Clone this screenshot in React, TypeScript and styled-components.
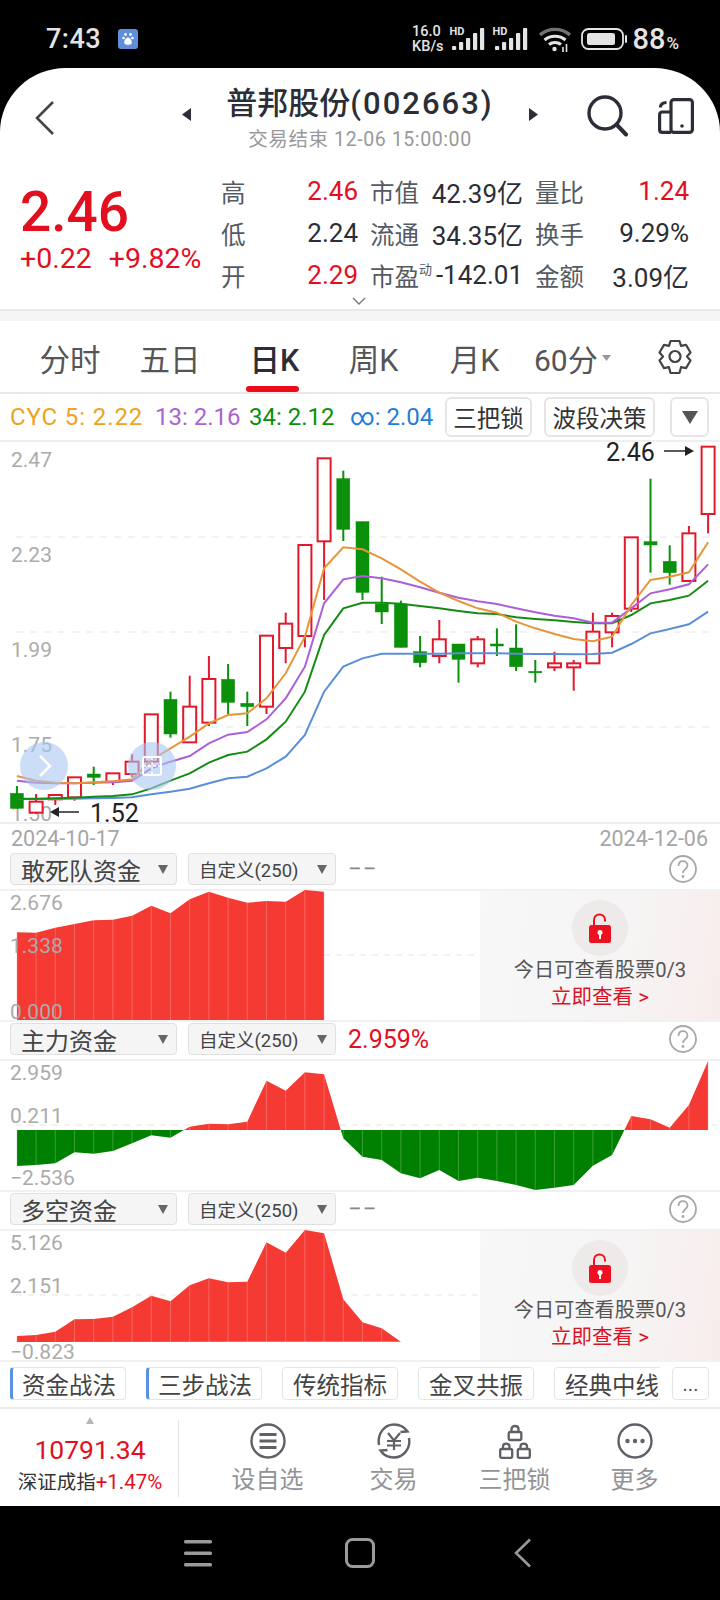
import React from "react";
import styled, { createGlobalStyle } from "styled-components";

const RED = "#e2101f";
const FONT = 'Roboto, "Noto Sans CJK SC", sans-serif';

const GlobalStyle = createGlobalStyle`
  html, body { margin: 0; padding: 0; background: #000; }
  * { box-sizing: border-box; }
  body { font-family: ${FONT}; }
`;

const Page = styled.div`
  width: 720px;
  height: 1600px;
  background: #000;
  display: flex;
  flex-direction: column;
  overflow: hidden;
`;

/* status bar */
const StatusBar = styled.div`
  height: 68px;
  flex: none;
  display: flex;
  align-items: center;
  padding: 10px 41px 0 46px;
  color: #e4e4e4;
`;
const Clock = styled.span`
  font-size: 27px;
  font-weight: 500;
  letter-spacing: 0.5px;
`;
const AppBadge = styled.span`
  width: 20px;
  height: 20px;
  margin-left: 17px;
  border-radius: 3px;
  background: #5f8fd8;
  display: flex;
  align-items: center;
  justify-content: center;
`;
const StatusRight = styled.div`
  margin-left: auto;
  display: flex;
  align-items: center;
`;
const Speed = styled.span`
  font-size: 14.5px;
  line-height: 15px;
  font-weight: 500;
  margin-right: 8px;
`;
const SignalGroup = styled.span`
  position: relative;
  display: flex;
  margin-right: 9px;
`;
const HdMark = styled.span`
  position: absolute;
  left: -2px;
  top: -2px;
  font-size: 11px;
  line-height: 11px;
  font-weight: 700;
`;
const WifiSlot = styled.span`
  display: flex;
  margin: 0 10px 0 1px;
`;
const BatteryText = styled.span`
  font-size: 29px;
  font-weight: 500;
  margin-left: 6px;
  small {
    font-size: 17px;
    margin-left: 1px;
  }
`;

/* white sheet */
const Sheet = styled.div`
  height: 1438px;
  flex: none;
  background: #fff;
  border-radius: 66px 66px 0 0 / 64px 64px 0 0;
  display: flex;
  flex-direction: column;
`;

const Header = styled.div`
  height: 92px;
  flex: none;
  display: grid;
  grid-template-columns: 110px 1fr 132px;
  align-items: center;
  padding-right: 26px;
`;
const BackButton = styled.div`
  padding: 8px 0 0 34px;
  display: flex;
`;
const TitleBar = styled.div`
  display: flex;
  align-items: center;
  justify-content: center;
  gap: 34px;
  padding-left: 48px;
`;
const TitleBlock = styled.div`
  text-align: center;
  width: 270px;
  padding-top: 6px;
`;
const Title = styled.div`
  font-size: 31px;
  line-height: 44px;
  font-weight: 500;
  color: #2b2e36;
  white-space: nowrap;
  span {
    letter-spacing: 2px;
  }
`;
const SubTitle = styled.div`
  margin-top: 1px;
  font-size: 19.5px;
  line-height: 26px;
  letter-spacing: 0.6px;
  color: #999;
  white-space: nowrap;
`;
const HeaderIcons = styled.div`
  display: flex;
  justify-content: space-between;
  align-items: center;
  padding: 4px 0 0 25px;
`;

const Quote = styled.div`
  height: 151px;
  flex: none;
  display: grid;
  grid-template-columns: 221px 1fr;
  padding: 10px 31px 0 0;
  border-bottom: 2px solid #e8e8e8;
  position: relative;
`;
const PriceBlock = styled.div`
  padding: 10px 0 0 20px;
  color: ${RED};
`;
const Price = styled.div`
  font-size: 55px;
  line-height: 64px;
  font-weight: 500;
`;
const Change = styled.div`
  margin-top: -2px;
  font-size: 28.5px;
  line-height: 34px;
  white-space: nowrap;
  display: flex;
  gap: 17px;
`;
const Stats = styled.div`
  display: grid;
  grid-template-columns: 44px 93px 73px 92px 77px 1fr;
  grid-auto-rows: 42px;
  align-items: center;
`;
const StatLabel = styled.span<{ $indent?: boolean }>`
  font-size: 24.5px;
  color: #555a64;
  white-space: nowrap;
  padding-left: ${(p) => (p.$indent ? 12 : 0)}px;
  sup {
    font-size: 13px;
    line-height: 0;
    vertical-align: 12px;
  }
`;
const StatValue = styled.span<{ $red?: boolean }>`
  font-size: 26px;
  text-align: right;
  white-space: nowrap;
  color: ${(p) => (p.$red ? RED : "#2b2e36")};
`;
const ExpandHint = styled.div`
  position: absolute;
  left: 352px;
  bottom: 4px;
  display: flex;
`;
const SectionGap = styled.div`
  height: 10px;
  flex: none;
  background: #f5f5f5;
`;

/* period tabs */
const PeriodTabs = styled.div`
  height: 73px;
  flex: none;
  display: grid;
  grid-template-columns: 100px 100px 109px 89px 113px 124px 1fr;
  align-items: center;
  padding: 0 28px 0 20px;
  border-bottom: 2px solid #e8e8e8;
`;
const PeriodTab = styled.div<{ $active?: boolean }>`
  position: relative;
  height: 100%;
  padding-top: 2px;
  display: flex;
  align-items: center;
  justify-content: center;
  font-size: 30.5px;
  color: ${(p) => (p.$active ? "#2b2e36" : "#555")};
  font-weight: ${(p) => (p.$active ? 500 : 400)};
  &::after {
    content: "";
    display: ${(p) => (p.$active ? "block" : "none")};
    position: absolute;
    left: 26px;
    width: 53px;
    bottom: 0;
    height: 6px;
    border-radius: 3px;
    background: #ee0a1a;
  }
`;
const MinuteTab = styled.div`
  font-size: 30px;
  color: #555;
  padding: 2px 0 0 3px;
  white-space: nowrap;
  display: flex;
  align-items: center;
  gap: 4px;
`;
const GearSlot = styled.div`
  display: flex;
  justify-content: flex-end;
`;

/* moving average row */
const MaRow = styled.div`
  height: 48px;
  flex: none;
  display: flex;
  align-items: center;
  padding: 0 11px 0 10px;
  border-bottom: 2px solid #efefef;
`;
const MaItem = styled.span<{ $color: string; $width: number; $spread?: boolean }>`
  width: ${(p) => p.$width}px;
  font-size: 24px;
  letter-spacing: ${(p) => (p.$spread ? 0.9 : 0)}px;
  color: ${(p) => p.$color};
  white-space: nowrap;
`;
const MaButtons = styled.div`
  margin-left: auto;
  display: flex;
  align-items: center;
`;
const MaButton = styled.div<{ $width: number; $gap: number }>`
  height: 40px;
  width: ${(p) => p.$width}px;
  margin-left: ${(p) => p.$gap}px;
  border: 2px solid #e6e6e6;
  border-radius: 6px;
  font-size: 23.5px;
  color: #333;
  display: flex;
  align-items: center;
  justify-content: center;
  white-space: nowrap;
`;

const ChartSvg = styled.svg`
  display: block;
  flex: none;
  overflow: visible;
  font-family: ${FONT};
`;

const DateRow = styled.div`
  height: 30px;
  flex: none;
  display: flex;
  justify-content: space-between;
  align-items: center;
  padding: 0 12px 0 11px;
  border-top: 2px solid #efefef;
  font-size: 21.5px;
  color: #a6a6a6;
`;

/* indicator panels */
const Panel = styled.div<{ $height: number }>`
  height: ${(p) => p.$height}px;
  flex: none;
  display: flex;
  flex-direction: column;
`;
const PanelHeader = styled.div`
  height: 39px;
  flex: none;
  display: flex;
  align-items: center;
  padding: 0 23px 3px 10px;
  border-bottom: 2px solid #f1f1f1;
`;
const Select = styled.div<{ $small?: boolean }>`
  height: 32px;
  width: ${(p) => (p.$small ? 148 : 167)}px;
  margin-right: ${(p) => (p.$small ? 12 : 11)}px;
  padding: 0 8px 0 10px;
  background: #f5f5f5;
  border: 1px solid #e0e0e0;
  border-radius: 4px;
  font-size: ${(p) => (p.$small ? 18.5 : 24)}px;
  color: #444;
  display: flex;
  align-items: center;
  justify-content: space-between;
  white-space: nowrap;
`;
const Caret = styled.span`
  width: 0;
  height: 0;
  border-left: 5.5px solid transparent;
  border-right: 5.5px solid transparent;
  border-top: 9px solid #666;
`;
const PanelValue = styled.span<{ $red?: boolean }>`
  font-size: ${(p) => (p.$red ? 25 : 24)}px;
  color: ${(p) => (p.$red ? RED : "#888")};
  letter-spacing: ${(p) => (p.$red ? 0 : 1)}px;
`;
const Help = styled.span`
  margin-left: auto;
  display: flex;
`;
const PanelChart = styled.div`
  position: relative;
  flex: 1;
  border-bottom: 2px solid #f1f1f1;
`;
const LockCard = styled.div`
  position: absolute;
  top: 0;
  right: 0;
  bottom: 0;
  width: 240px;
  background: linear-gradient(100deg, #f8f8f8 0%, #f6f4f4 60%, #f8ecec 100%);
  display: flex;
  flex-direction: column;
  align-items: center;
  padding-top: 9px;
`;
const LockCircle = styled.div`
  width: 56px;
  height: 56px;
  border-radius: 50%;
  background: #eeeaea;
  display: flex;
  align-items: center;
  justify-content: center;
`;
const LockText = styled.div`
  font-size: 20.2px;
  line-height: 28px;
  color: #555;
  white-space: nowrap;
`;
const LockLink = styled.div`
  font-size: 20.5px;
  line-height: 27px;
  color: #d81526;
  white-space: nowrap;
`;

/* strategy tabs */
const StrategyRow = styled.div`
  height: 48px;
  flex: none;
  display: flex;
  align-items: center;
  padding: 0 11px 1px 10px;
  border-bottom: 2px solid #ededed;
`;
const StrategyScroller = styled.div`
  width: 650px;
  display: flex;
  gap: 20px;
  overflow: hidden;
`;
const StrategyTab = styled.div<{ $marked?: boolean }>`
  width: 116px;
  height: 33px;
  flex: none;
  border: 1px solid #e4e4e4;
  border-left: ${(p) => (p.$marked ? "3px solid #5b8fe0" : "1px solid #e4e4e4")};
  border-radius: 4px;
  font-size: 23.5px;
  color: #444;
  display: flex;
  align-items: center;
  justify-content: center;
  white-space: nowrap;
`;
const MoreTab = styled.div`
  margin-left: auto;
  width: 37px;
  height: 33px;
  border: 1px solid #e4e4e4;
  border-radius: 4px;
  font-size: 20px;
  color: #555;
  display: flex;
  align-items: center;
  justify-content: center;
`;

/* bottom nav */
const BottomNav = styled.div`
  flex: 1;
  display: flex;
`;
const IndexBlock = styled.div`
  width: 179px;
  flex: none;
  margin: 11px 0 11px;
  padding: 0 16px 0 18px;
  border-right: 1px solid #e2e2e2;
  display: flex;
  flex-direction: column;
  align-items: center;
`;
const UpMark = styled.span`
  width: 0;
  height: 0;
  flex: none;
  margin-top: -3px;
  border-left: 4.5px solid transparent;
  border-right: 4.5px solid transparent;
  border-bottom: 7px solid #b5b5b5;
`;
const IndexValue = styled.div`
  margin-top: 8px;
  font-size: 26.5px;
  line-height: 36px;
  color: ${RED};
`;
const IndexName = styled.div`
  font-size: 19.5px;
  line-height: 28px;
  color: #333;
  white-space: nowrap;
  span {
    color: ${RED};
    font-size: 20.5px;
  }
`;
const NavItems = styled.div`
  display: grid;
  grid-template-columns: 131px 121px 121px 119px;
  padding: 14px 0 0 23px;
`;
const NavItem = styled.div`
  display: flex;
  flex-direction: column;
  align-items: center;
  font-size: 24px;
  color: #929396;
`;
const NavLabel = styled.span`
  margin-top: 3px;
  line-height: 36px;
`;

/* system nav */
const SystemNav = styled.div`
  height: 94px;
  flex: none;
  display: grid;
  grid-template-columns: 161px 168px 1fr;
  align-items: center;
  padding-left: 184px;
`;

/* ---- chart data ---- */

type Candle = [number, number, number, number, "r" | "g"];
const CANDLES: Candle[] = [
  [1038, 1060, 1105, 1105, "g"], [1062, 1085, 1118, 1122, "r"], [1062, 1065, 1078, 1095, "r"],
  [1012, 1012, 1072, 1082, "r"], [980, 1002, 1012, 1035, "g"], [1000, 1000, 1025, 1035, "r"],
  [943, 965, 1002, 1012, "r"], [823, 823, 965, 975, "r"], [755, 778, 882, 893, "g"],
  [707, 800, 907, 907, "r"], [648, 717, 848, 858, "r"], [672, 718, 787, 822, "g"],
  [755, 790, 800, 858, "g"], [587, 587, 800, 822, "r"], [518, 551, 624, 670, "r"],
  [315, 315, 588, 622, "r"], [55, 55, 304, 480, "r"], [92, 116, 268, 303, "g"],
  [245, 245, 457, 480, "g"], [410, 492, 516, 552, "g"], [482, 492, 622, 622, "g"],
  [588, 635, 668, 682, "g"], [540, 598, 648, 670, "r"], [612, 612, 658, 728, "g"],
  [588, 598, 670, 682, "r"], [565, 612, 618, 648, "g"], [553, 624, 680, 693, "g"],
  [660, 694, 698, 728, "g"], [635, 670, 682, 693, "r"], [660, 670, 682, 752, "r"],
  [518, 575, 670, 670, "r"], [518, 528, 577, 622, "r"], [292, 292, 506, 516, "r"],
  [116, 305, 315, 398, "g"], [316, 364, 398, 434, "g"], [258, 280, 423, 423, "r"],
  [20, 20, 222, 280, "r"],
];

const ORANGE = [1008, 1022, 1028, 1030, 1027, 1024, 1018, 960, 925, 890, 850, 825, 820, 775, 700, 590, 385, 322, 328, 355, 388, 425, 458, 483, 505, 518, 545, 565, 582, 597, 604, 590, 495, 420, 410, 397, 307];
const PURPLE = [1022, 1028, 1030, 1030, 1028, 1027, 1022, 985, 965, 948, 910, 884, 876, 838, 775, 680, 490, 418, 408, 415, 427, 442, 458, 473, 484, 492, 505, 517, 527, 535, 548, 548, 505, 460, 448, 433, 373];
const GREEN = [1076, 1076, 1075, 1073, 1070, 1068, 1063, 1045, 1022, 1000, 968, 945, 935, 898, 845, 755, 585, 505, 488, 488, 491, 498, 505, 513, 520, 522, 532, 537, 541, 546, 550, 550, 525, 490, 480, 467, 422];
const BLUE = [1077, 1077, 1077, 1076, 1075, 1074, 1072, 1063, 1055, 1046, 1030, 1015, 1010, 985, 950, 885, 755, 680, 655, 641, 641, 641, 641, 640, 640, 640, 641, 642, 642, 643, 642, 638, 612, 580, 567, 553, 515];

// x of the i-th trading day; candle prices were read off a 3x crop, hence py()
const cx = (i: number) => 16.9 + 19.2 * i;
const py = (v: number) => v / 3 + 440;
const linePoints = (ys: number[]) => ys.map((y, i) => `${cx(i)},${py(y)}`).join(" ");

const DEATH_SQUAD = [262, 263, 248, 237, 226, 224, 212, 182, 205, 163, 140, 158, 173, 168, 170, 135, 140];
const MAIN_FUNDS = [963, 960, 955, 922, 926, 918, 895, 871, 878, 845, 836, 838, 830, 707, 737, 682, 688, 880, 935, 945, 985, 1000, 975, 1008, 998, 1008, 1020, 1035, 1028, 1020, 962, 930, 813, 823, 848, 780, 648];
const LONG_SHORT = [468, 465, 455, 418, 417, 410, 382, 347, 364, 316, 295, 307, 305, 187, 218, 150, 160, 358, 427, 445, 485];

const AXIS = "#ababab";
const AREA_RED = "#f53a33";

const AxisText = ({ x = 11, y, children }: { x?: number; y: number; children: React.ReactNode }) => (
  <text x={x} y={y} fontSize={21} fill={AXIS} dominantBaseline="central">
    {children}
  </text>
);

const KLineChart = () => (
  <ChartSvg width={720} height={380} viewBox="0 442 720 380">
    {[537, 632, 727].map((y) => (
      <line key={y} x1={16} x2={710} y1={y} y2={y} stroke="#eee" strokeWidth={1.5} strokeDasharray="7 7" />
    ))}
    <AxisText y={460}>2.47</AxisText>
    <AxisText y={555}>2.23</AxisText>
    <AxisText y={650}>1.99</AxisText>
    <AxisText y={745}>1.75</AxisText>
    <AxisText y={814}>1.50</AxisText>
    {CANDLES.map(([hi, top, bottom, lo, kind], i) => {
      const color = kind === "r" ? "#e01a2b" : "#0a900a";
      return (
        <g key={i}>
          <line x1={cx(i)} x2={cx(i)} y1={py(hi)} y2={py(lo)} stroke={color} strokeWidth={2} />
          <rect
            x={cx(i) - 6.5}
            y={py(top)}
            width={13}
            height={Math.max(py(bottom) - py(top), 1.5)}
            fill={kind === "r" ? "#fff" : color}
            stroke={color}
            strokeWidth={kind === "r" ? 2 : 0.5}
          />
        </g>
      );
    })}
    <polyline points={linePoints(BLUE)} fill="none" stroke="#5a8fd8" strokeWidth={2} />
    <polyline points={linePoints(GREEN)} fill="none" stroke="#148c14" strokeWidth={2} />
    <polyline points={linePoints(PURPLE)} fill="none" stroke="#ac5fd8" strokeWidth={2} />
    <polyline points={linePoints(ORANGE)} fill="none" stroke="#e8953a" strokeWidth={2} />

    <circle cx={44} cy={766} r={24} fill="#a9c6f2" fillOpacity={0.6} />
    <path d="M40 756l10 10-10 10" fill="none" stroke="#fff" strokeWidth={2.5} />
    <circle cx={152} cy={766} r={24} fill="#a9c6f2" fillOpacity={0.6} />
    <rect x={143} y={757} width={18} height={18} rx={2} fill="none" stroke="#fff" strokeWidth={2} />
    <path d="M152 757v18M143 766h18" stroke="#fff" strokeWidth={1.5} strokeDasharray="3 2" />

    <path d="M79 812H54" stroke="#222" strokeWidth={1.5} />
    <path d="M50 812l9-5v10z" fill="#222" />
    <text x={90} y={813} fontSize={25} fill="#222" dominantBaseline="central">1.52</text>
    <text x={606} y={452} fontSize={25} fill="#222" dominantBaseline="central">2.46</text>
    <path d="M664 451h25" stroke="#222" strokeWidth={1.5} />
    <path d="M694 451l-9-5v10z" fill="#222" />
  </ChartSvg>
);

const seams = (count: number, top: number, bottom: number) =>
  Array.from({ length: count }, (_, i) => (
    <line key={i} x1={cx(i)} x2={cx(i)} y1={top} y2={bottom} stroke="#fff" strokeOpacity={0.22} strokeWidth={1} />
  ));

const DeathSquadChart = () => {
  const base = 1020;
  const tops = DEATH_SQUAD.map((v, i) => `${cx(i)},${v / 3 + 845}`).join(" ");
  const area = `${cx(0)},${base} ${tops} ${cx(16)},${base}`;
  return (
    <ChartSvg width={720} height={129} viewBox="0 891 720 129">
      <defs>
        <clipPath id="squad"><polygon points={area} /></clipPath>
      </defs>
      <line x1={324} x2={720} y1={955} y2={955} stroke="#eee" strokeWidth={1.5} strokeDasharray="6 6" />
      <polygon points={area} fill={AREA_RED} />
      <g clipPath="url(#squad)">{seams(17, 891, base)}</g>
      <AxisText x={10} y={903}>2.676</AxisText>
      <AxisText x={10} y={946}>1.338</AxisText>
      <AxisText x={10} y={1012}>0.000</AxisText>
    </ChartSvg>
  );
};

const MainFundsChart = () => {
  const zero = 1130;
  const tops = MAIN_FUNDS.map((v, i) => `${cx(i)},${v / 3 + 845}`).join(" ");
  const area = `${cx(0)},${zero} ${tops} ${cx(36)},${zero}`;
  return (
    <ChartSvg width={720} height={129} viewBox="0 1061 720 129">
      <defs>
        <clipPath id="above"><rect x={0} y={1061} width={720} height={zero - 1061} /></clipPath>
        <clipPath id="below"><rect x={0} y={zero} width={720} height={1190 - zero} /></clipPath>
        <clipPath id="funds"><polygon points={area} /></clipPath>
      </defs>
      <line x1={16} x2={716} y1={1125} y2={1125} stroke="#eee" strokeWidth={1.5} strokeDasharray="6 6" />
      <polygon points={area} fill={AREA_RED} clipPath="url(#above)" />
      <polygon points={area} fill="#008000" clipPath="url(#below)" />
      <g clipPath="url(#funds)">{seams(37, 1061, 1190)}</g>
      <AxisText x={10} y={1073}>2.959</AxisText>
      <AxisText x={10} y={1116}>0.211</AxisText>
      <AxisText x={10} y={1178}>−2.536</AxisText>
    </ChartSvg>
  );
};

const LongShortChart = () => {
  const base = 1342;
  const tops = LONG_SHORT.map((v, i) => `${cx(i)},${v / 3 + 1180}`).join(" ");
  const area = `${cx(0)},${base} ${tops}`;
  return (
    <ChartSvg width={720} height={129} viewBox="0 1231 720 129">
      <defs>
        <clipPath id="longshort"><polygon points={area} /></clipPath>
      </defs>
      <line x1={16} x2={720} y1={1295} y2={1295} stroke="#eee" strokeWidth={1.5} strokeDasharray="6 6" />
      <polygon points={area} fill={AREA_RED} />
      <g clipPath="url(#longshort)">{seams(20, 1231, base)}</g>
      <AxisText x={10} y={1243}>5.126</AxisText>
      <AxisText x={10} y={1286}>2.151</AxisText>
      <AxisText x={10} y={1352}>−0.823</AxisText>
    </ChartSvg>
  );
};

/* ---- icons ---- */

const Paw = () => (
  <svg width={12} height={14} viewBox="0 0 12 14" fill="#fff">
    <circle cx={3.5} cy={2.5} r={1.4} />
    <circle cx={8.5} cy={2.5} r={1.4} />
    <circle cx={1.5} cy={6} r={1.3} />
    <circle cx={10.5} cy={6} r={1.3} />
    <path d="M6 5.500c2 0 3.800 3 3.800 5 0 1.800-1.600 2.300-3.800 2.300S2.200 12.300 2.200 10.500c0-2 1.800-5 3.800-5z" />
  </svg>
);

const Signal = () => (
  <svg width={34} height={22} viewBox="0 0 34 22" fill="#e4e4e4">
    <rect x={0} y={18} width={4.2} height={4} rx={1} />
    <rect x={7} y={14} width={4.2} height={8} rx={1} />
    <rect x={14} y={10} width={4.2} height={12} rx={1} />
    <rect x={21} y={5} width={4.2} height={17} rx={1} />
    <rect x={28} y={0} width={4.2} height={22} rx={1} />
  </svg>
);

const Wifi = () => (
  <svg width={32} height={25} viewBox="0 0 32 25" fill="none" stroke="#e4e4e4">
    <path d="M1 8C9.500 0.500 22.500 0.500 31 8" strokeWidth={3.4} strokeOpacity={0.5} />
    <path d="M5.500 13c6-5 15-5 21 0" strokeWidth={3} />
    <path d="M10 17.500c3.500-2.800 8.500-2.800 12 0" strokeWidth={3} />
    <circle cx={15.500} cy={22} r={2.200} fill="#e4e4e4" stroke="none" />
    <path d="M24 20v5M27.500 17v8" strokeWidth={1.6} />
  </svg>
);

const BatteryIcon = () => (
  <svg width={46} height={22} viewBox="0 0 46 22">
    <rect x={1} y={1} width={41} height={20} rx={6.500} fill="none" stroke="#e4e4e4" strokeWidth={1.8} />
    <rect x={6} y={5} width={28} height={12} rx={2.500} fill="#e4e4e4" />
    <rect x={44} y={7} width={2} height={8} rx={1} fill="#e4e4e4" />
  </svg>
);

const BackIcon = () => (
  <svg width={22} height={36} viewBox="0 0 22 36" fill="none" stroke="#444" strokeWidth={2.6}>
    <path d="M19 2L3 18l16 16" />
  </svg>
);

const SmallArrow = ({ dir }: { dir: "l" | "r" }) => (
  <svg width={9} height={13} viewBox="0 0 9 13" fill="#2b2e36">
    <path d={dir === "l" ? "M9 0v13L0 6.500z" : "M0 0v13l9-6.500z"} />
  </svg>
);

const SearchIcon = () => (
  <svg width={42} height={42} viewBox="0 0 42 42" fill="none" stroke="#2b2e36" strokeWidth={3.4}>
    <circle cx={18} cy={18} r={16} />
    <path d="M30 30l9 9.500" strokeWidth={4} strokeLinecap="round" />
  </svg>
);

const PhoneIcon = () => (
  <svg width={36} height={36} viewBox="0 0 36 36" fill="none" stroke="#2b2e36" strokeWidth={3.2}>
    <rect x={13} y={1.600} width={21.400} height={32.800} rx={3} />
    <path d="M13 14H4.500C2.800 14 1.600 15.200 1.600 17v14.500c0 1.800 1.200 2.900 2.900 2.900H13" />
    <path d="M8.500 4.500c-3.500 0-6 1.500-6 5" strokeWidth={3} />
    <circle cx={24} cy={28} r={1.800} fill="#2b2e36" stroke="none" />
  </svg>
);

const ChevronDown = () => (
  <svg width={14} height={8} viewBox="0 0 14 8" fill="none" stroke="#777" strokeWidth={1.4}>
    <path d="M1 1l6 6 6-6" />
  </svg>
);

const GearIcon = () => (
  <svg width={34} height={36} viewBox="0 0 34 36" fill="none" stroke="#444" strokeWidth={2.2}>
    <path d="M12.500 2h9l1.500 4.800 5-.9 4.500 7.600L29 17.500l3.500 4-4.500 7.600-5-.9-1.500 5.800h-9L11 28.200l-5 .9-4.500-7.600 3.500-4-3.500-4L6 5.900l5 .9z" strokeLinejoin="round" />
    <circle cx={17} cy={17.500} r={5.500} />
  </svg>
);

const HelpIcon = () => (
  <svg width={28} height={28} viewBox="0 0 28 28" fill="none" stroke="#a8a8a8" strokeWidth={1.8}>
    <circle cx={14} cy={14} r={13} />
    <path d="M9.500 11c0-3 2-4.800 4.500-4.800s4.500 1.800 4.500 4.300c0 3.500-4.500 3.800-4.500 7.500" />
    <circle cx={14} cy={21.500} r={1.400} fill="#a8a8a8" stroke="none" />
  </svg>
);

const OpenLock = () => (
  <svg width={24} height={30} viewBox="0 0 24 30">
    <path d="M6 14V7c0-3.500 2.500-5.500 5.500-5.500S17 3.500 17 7v1.500" fill="none" stroke="#ec1020" strokeWidth={2} />
    <rect x={1} y={12} width={22} height={18} rx={2.500} fill="#ec1020" />
    <circle cx={12} cy={19.500} r={2.500} fill="#fff" />
    <rect x={11} y={20} width={2} height={6} fill="#fff" />
  </svg>
);

const ListIcon = () => (
  <svg width={36} height={36} viewBox="0 0 36 36" fill="none" stroke="#5f6068" strokeWidth={2.4}>
    <circle cx={18} cy={18} r={16.500} />
    <path d="M9.500 11.500h17M9.500 18h17M9.500 24.500h17" strokeWidth={2.800} />
  </svg>
);

const TradeIcon = () => (
  <svg width={36} height={36} viewBox="0 0 36 36" fill="none" stroke="#5f6068" strokeWidth={2.4}>
    <path d="M3 22C1 10 9 1.500 18 1.500c6 0 10.500 2.500 13.500 7l-7 .5" />
    <path d="M33 15c2 11-6 19.500-15 19.500-6 0-10.500-2.500-13.500-7l7-.5" />
    <path d="M12 10l6 7.500 6-7.500M11 18h14M11 22.500h14M18 17.500V27" strokeWidth={2.200} />
  </svg>
);

const LocksIcon = () => (
  <svg width={32} height={36} viewBox="0 0 32 36" fill="none" stroke="#5f6068" strokeWidth={2.3}>
    <rect x={9.700} y={9} width={12.600} height={8} rx={1.500} />
    <path d="M12.500 9V6c0-4 7-4 7 0v3" />
    <rect x={1.200} y={26} width={12} height={8.800} rx={1.500} />
    <path d="M4 26v-2.500c0-3.800 6.500-3.800 6.500 0V26" />
    <rect x={18.800} y={26} width={12} height={8.800} rx={1.500} />
    <path d="M21.500 26v-2.500c0-3.800 6.500-3.800 6.500 0V26" />
  </svg>
);

const MoreIcon = () => (
  <svg width={36} height={36} viewBox="0 0 36 36" fill="none" stroke="#5f6068" strokeWidth={2.4}>
    <circle cx={18} cy={18} r={16.500} />
    <circle cx={10.500} cy={18} r={2.200} fill="#5f6068" stroke="none" />
    <circle cx={18} cy={18} r={2.200} fill="#5f6068" stroke="none" />
    <circle cx={25.500} cy={18} r={2.200} fill="#5f6068" stroke="none" />
  </svg>
);

const LockOverlay = () => (
  <LockCard>
    <LockCircle>
      <OpenLock />
    </LockCircle>
    <LockText>今日可查看股票0/3</LockText>
    <LockLink>立即查看 &gt;</LockLink>
  </LockCard>
);

const PanelTop = ({ name, value, red }: { name: string; value: string; red?: boolean }) => (
  <PanelHeader>
    <Select>
      {name}
      <Caret />
    </Select>
    <Select $small>
      自定义(250)
      <Caret />
    </Select>
    <PanelValue $red={red}>{value}</PanelValue>
    <Help>
      <HelpIcon />
    </Help>
  </PanelHeader>
);

const STATS: [string, string, boolean?][][] = [
  [["高", "2.46", true], ["市值", "42.39亿"], ["量比", "1.24", true]],
  [["低", "2.24"], ["流通", "34.35亿"], ["换手", "9.29%"]],
  [["开", "2.29", true], ["市盈", "-142.01"], ["金额", "3.09亿"]],
];

const MA: [string, string, number][] = [
  ["CYC 5: 2.22", "#eda321", 145],
  ["13: 2.16", "#ab62d6", 94],
  ["34: 2.12", "#0b8f0b", 101],
  ["∞: 2.04", "#1f7fd6", 90],
];

export default function App() {
  return (
    <Page>
      <GlobalStyle />
      <StatusBar>
        <Clock>7:43</Clock>
        <AppBadge>
          <Paw />
        </AppBadge>
        <StatusRight>
          <Speed>
            16.0
            <br />
            KB/s
          </Speed>
          <SignalGroup>
            <HdMark>HD</HdMark>
            <Signal />
          </SignalGroup>
          <SignalGroup>
            <HdMark>HD</HdMark>
            <Signal />
          </SignalGroup>
          <WifiSlot>
            <Wifi />
          </WifiSlot>
          <BatteryIcon />
          <BatteryText>
            88<small>%</small>
          </BatteryText>
        </StatusRight>
      </StatusBar>

      <Sheet>
        <Header>
          <BackButton>
            <BackIcon />
          </BackButton>
          <TitleBar>
            <SmallArrow dir="l" />
            <TitleBlock>
              <Title>
                普邦股份<span>(002663)</span>
              </Title>
              <SubTitle>交易结束 12-06 15:00:00</SubTitle>
            </TitleBlock>
            <SmallArrow dir="r" />
          </TitleBar>
          <HeaderIcons>
            <SearchIcon />
            <PhoneIcon />
          </HeaderIcons>
        </Header>

        <Quote>
          <PriceBlock>
            <Price>2.46</Price>
            <Change>
              <span>+0.22</span>
              <span>+9.82%</span>
            </Change>
          </PriceBlock>
          <Stats>
            {STATS.map((row) =>
              row.map(([label, value, red], col) => (
                <React.Fragment key={label}>
                  <StatLabel $indent={col > 0}>
                    {label}
                    {label === "市盈" && <sup>动</sup>}
                  </StatLabel>
                  <StatValue $red={red}>{value}</StatValue>
                </React.Fragment>
              ))
            )}
          </Stats>
          <ExpandHint>
            <ChevronDown />
          </ExpandHint>
        </Quote>
        <SectionGap />

        <PeriodTabs>
          <PeriodTab>分时</PeriodTab>
          <PeriodTab>五日</PeriodTab>
          <PeriodTab $active>日K</PeriodTab>
          <PeriodTab>周K</PeriodTab>
          <PeriodTab>月K</PeriodTab>
          <MinuteTab>
            60分
            <svg width={9} height={6} viewBox="0 0 9 6" fill="#999">
              <path d="M0 0h9L4.500 6z" />
            </svg>
          </MinuteTab>
          <GearSlot>
            <GearIcon />
          </GearSlot>
        </PeriodTabs>

        <MaRow>
          {MA.map(([text, color, width], i) => (
            <MaItem key={text} $color={color} $width={width} $spread={i === 0}>
              {text}
            </MaItem>
          ))}
          <MaButtons>
            <MaButton $width={87} $gap={0}>三把锁</MaButton>
            <MaButton $width={111} $gap={12}>波段决策</MaButton>
            <MaButton $width={39} $gap={15}>
              <svg width={16} height={13} viewBox="0 0 16 13" fill="#555">
                <path d="M0 0h16L8 13z" />
              </svg>
            </MaButton>
          </MaButtons>
        </MaRow>

        <KLineChart />
        <DateRow>
          <span>2024-10-17</span>
          <span>2024-12-06</span>
        </DateRow>

        <Panel $height={170}>
          <PanelTop name="敢死队资金" value="−−" />
          <PanelChart>
            <DeathSquadChart />
            <LockOverlay />
          </PanelChart>
        </Panel>
        <Panel $height={170}>
          <PanelTop name="主力资金" value="2.959%" red />
          <PanelChart>
            <MainFundsChart />
          </PanelChart>
        </Panel>
        <Panel $height={169}>
          <PanelTop name="多空资金" value="−−" />
          <PanelChart>
            <LongShortChart />
            <LockOverlay />
          </PanelChart>
        </Panel>

        <StrategyRow>
          <StrategyScroller>
            <StrategyTab $marked>资金战法</StrategyTab>
            <StrategyTab $marked>三步战法</StrategyTab>
            <StrategyTab>传统指标</StrategyTab>
            <StrategyTab>金叉共振</StrategyTab>
            <StrategyTab>经典中线</StrategyTab>
          </StrategyScroller>
          <MoreTab>...</MoreTab>
        </StrategyRow>

        <BottomNav>
          <IndexBlock>
            <UpMark />
            <IndexValue>10791.34</IndexValue>
            <IndexName>
              深证成指<span>+1.47%</span>
            </IndexName>
          </IndexBlock>
          <NavItems>
            <NavItem>
              <ListIcon />
              <NavLabel>设自选</NavLabel>
            </NavItem>
            <NavItem>
              <TradeIcon />
              <NavLabel>交易</NavLabel>
            </NavItem>
            <NavItem>
              <LocksIcon />
              <NavLabel>三把锁</NavLabel>
            </NavItem>
            <NavItem>
              <MoreIcon />
              <NavLabel>更多</NavLabel>
            </NavItem>
          </NavItems>
        </BottomNav>
      </Sheet>

      <SystemNav>
        <svg width={28} height={28} viewBox="0 0 28 28" fill="#9a9a9a">
          <rect x={0} y={1} width={28} height={3.500} rx={1.500} />
          <rect x={0} y={12.500} width={28} height={3.500} rx={1.500} />
          <rect x={0} y={24} width={28} height={3.500} rx={1.500} />
        </svg>
        <svg width={30} height={30} viewBox="0 0 30 30" fill="none" stroke="#9a9a9a" strokeWidth={3}>
          <rect x={1.500} y={1.500} width={27} height={27} rx={6} />
        </svg>
        <svg width={20} height={30} viewBox="0 0 20 30" fill="none" stroke="#9a9a9a" strokeWidth={2.6}>
          <path d="M17 1.500L3 15l14 13.500" />
        </svg>
      </SystemNav>
    </Page>
  );
}
